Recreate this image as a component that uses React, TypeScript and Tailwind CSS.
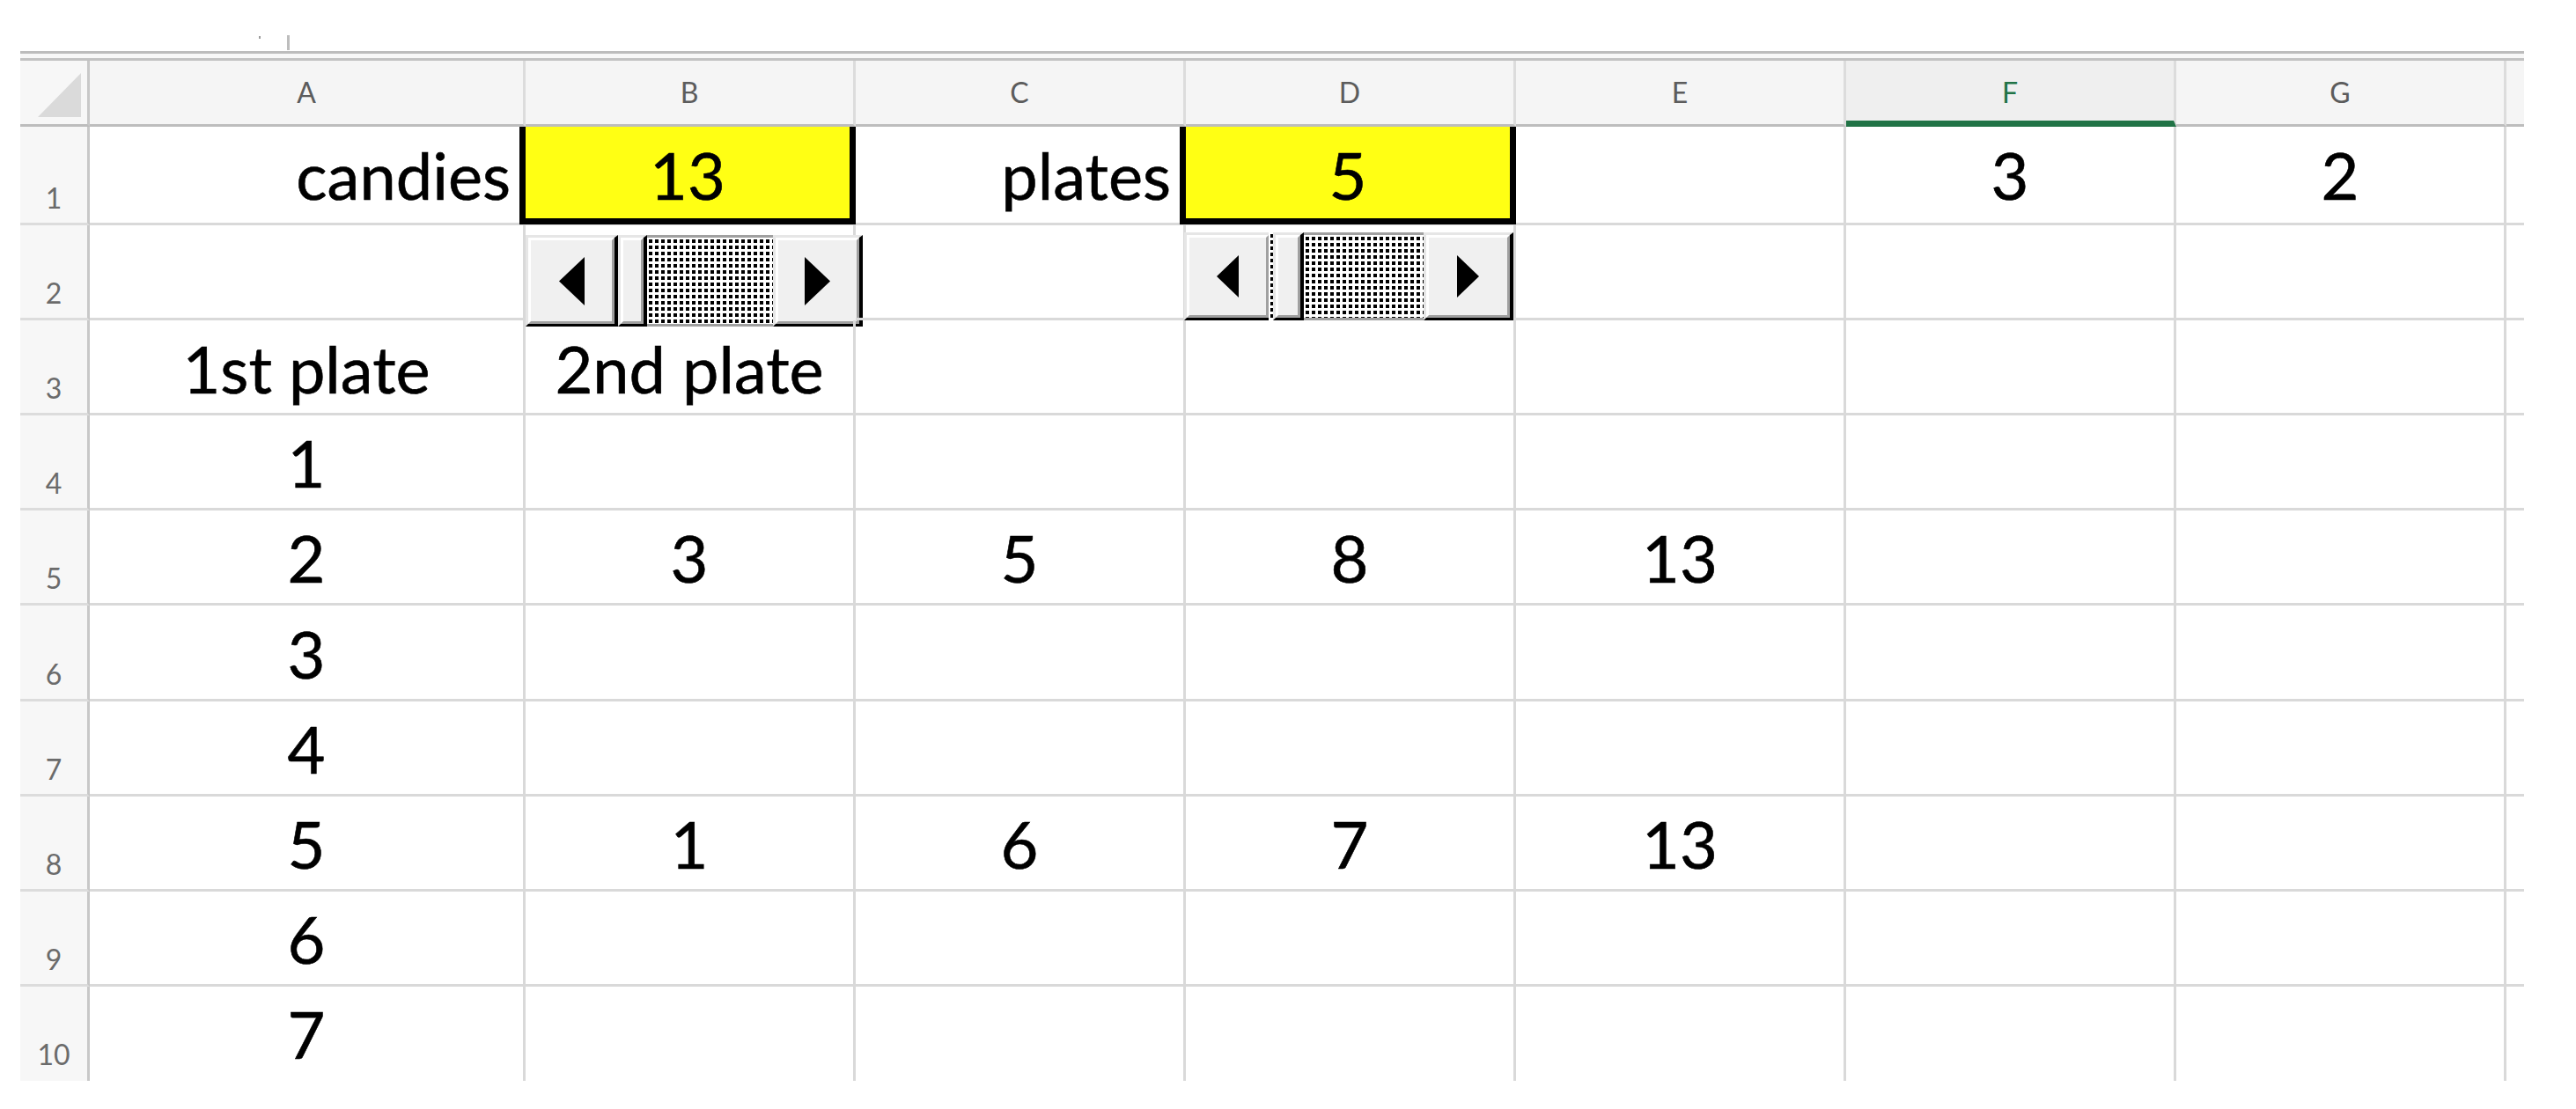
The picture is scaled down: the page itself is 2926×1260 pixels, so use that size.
import React from "react";

type CellSpec = {
  text?: string;
  right?: boolean;
  yellow?: boolean;
  scroll?: "b" | "d";
};

type RowSpec = {
  label: string;
  h: string;
  pad: string;
  labelPad: string;
  last?: boolean;
  cells: CellSpec[];
};

const colWidths = [
  "w-[495px]",
  "w-[375px]",
  "w-[375px]",
  "w-[375px]",
  "w-[375px]",
  "w-[375px]",
  "w-[375px]",
];
const colNames = ["A", "B", "C", "D", "E", "F", "G"];

const rows: RowSpec[] = [
  {
    label: "1",
    h: "h-[112px]",
    pad: "pb-[17px]",
    labelPad: "pb-[12px]",
    cells: [
      { text: "candies", right: true },
      { text: "13", yellow: true },
      { text: "plates", right: true },
      { text: "5", yellow: true },
      {},
      { text: "3" },
      { text: "2" },
    ],
  },
  {
    label: "2",
    h: "h-[108px]",
    pad: "pb-[14px]",
    labelPad: "pb-[12px]",
    cells: [{}, { scroll: "b" }, {}, { scroll: "d" }, {}, {}, {}],
  },
  {
    label: "3",
    h: "h-[108px]",
    pad: "pb-[13px]",
    labelPad: "pb-[12px]",
    cells: [{ text: "1st plate" }, { text: "2nd plate" }, {}, {}, {}, {}, {}],
  },
  {
    label: "4",
    h: "h-[108px]",
    pad: "pb-[14px]",
    labelPad: "pb-[12px]",
    cells: [{ text: "1" }, {}, {}, {}, {}, {}, {}],
  },
  {
    label: "5",
    h: "h-[108px]",
    pad: "pb-[14px]",
    labelPad: "pb-[12px]",
    cells: [
      { text: "2" },
      { text: "3" },
      { text: "5" },
      { text: "8" },
      { text: "13" },
      {},
      {},
    ],
  },
  {
    label: "6",
    h: "h-[109px]",
    pad: "pb-[14px]",
    labelPad: "pb-[12px]",
    cells: [{ text: "3" }, {}, {}, {}, {}, {}, {}],
  },
  {
    label: "7",
    h: "h-[108px]",
    pad: "pb-[14px]",
    labelPad: "pb-[12px]",
    cells: [{ text: "4" }, {}, {}, {}, {}, {}, {}],
  },
  {
    label: "8",
    h: "h-[108px]",
    pad: "pb-[14px]",
    labelPad: "pb-[12px]",
    cells: [
      { text: "5" },
      { text: "1" },
      { text: "6" },
      { text: "7" },
      { text: "13" },
      {},
      {},
    ],
  },
  {
    label: "9",
    h: "h-[108px]",
    pad: "pb-[14px]",
    labelPad: "pb-[12px]",
    cells: [{ text: "6" }, {}, {}, {}, {}, {}, {}],
  },
  {
    label: "10",
    h: "h-[107px]",
    pad: "pb-[16px]",
    labelPad: "pb-[14px]",
    last: true,
    cells: [{ text: "7" }, {}, {}, {}, {}, {}, {}],
  },
];

const Arrow = ({ dir, w, h }: { dir: "left" | "right"; w: number; h: number }) => (
  <svg width={w} height={h} viewBox={`0 0 ${w} ${h}`} className="block">
    <polygon
      points={dir === "left" ? `${w},0 0,${h / 2} ${w},${h}` : `0,0 ${w},${h / 2} 0,${h}`}
      fill="#000"
    />
  </svg>
);

// dithered scroll track
const Dots = ({ id }: { id: string }) => (
  <svg className="block h-full w-full" shapeRendering="crispEdges">
    <defs>
      <pattern id={id} width="7" height="7" patternUnits="userSpaceOnUse">
        <rect x="2" y="2" width="4" height="4" fill="#000" />
      </pattern>
    </defs>
    <rect width="100%" height="100%" fill={`url(#${id})`} />
  </svg>
);

const Button = ({
  className,
  edge,
  children,
}: {
  className: string;
  edge: boolean;
  children?: React.ReactNode;
}) => (
  <div
    className={`${className} flex shrink-0 border-t-[3px] border-l-[3px] border-b-[3px] border-t-[#e6e6e6] border-l-[#e6e6e6] border-b-black ${
      edge ? "border-r-[4px] border-r-black" : ""
    }`}
  >
    <div className="flex flex-1 items-center justify-center border-[3px] border-t-white border-l-white border-b-[#a0a0a0] border-r-[#a0a0a0] bg-[#f0f0f0]">
      {children}
    </div>
  </div>
);

const ScrollBar = ({ variant }: { variant: "b" | "d" }) => {
  const big = variant === "b";
  return (
    <div
      className={
        big
          ? "absolute left-0 top-[11px] flex h-[104px] w-[383px]"
          : "absolute -left-[2px] top-[8px] flex h-[100px] w-[374px]"
      }
    >
      <Button className={big ? "w-[105px]" : "w-[96px]"} edge={big}>
        <Arrow dir="left" w={big ? 29 : 25} h={big ? 55 : 48} />
      </Button>
      {!big && (
        <div className="w-[5px] shrink-0 bg-white">
          <Dots id="strip-d" />
        </div>
      )}
      <Button className={big ? "w-[33px]" : "w-[35px]"} edge />
      <div
        className={`${big ? "w-[143px]" : "w-[136px]"} shrink-0 border-y-[3px] border-[#a0a0a0] bg-white`}
      >
        <Dots id={`track-${variant}`} />
      </div>
      <Button className="w-[102px]" edge>
        <Arrow dir="right" w={big ? 29 : 25} h={big ? 55 : 48} />
      </Button>
    </div>
  );
};

export default function App() {
  return (
    <div className="h-[1260px] w-[2926px] overflow-hidden bg-white font-[Lato,sans-serif] text-black">
      {/* stray marks above the sheet */}
      <div className="flex h-[58px] items-start pt-[40px]">
        <div className="ml-[294px] mt-[1px] h-[3px] w-[2px] bg-[#9c9c9c]" />
        <div className="ml-[30px] h-[17px] w-[3px] bg-[#bdbdbd]" />
      </div>

      <div className="ml-[23px] w-[2844px]">
        <div className="h-[3px] bg-[#bcbcbc]" />
        <div className="h-[5px] bg-[#f7f7f7]" />
        <div className="h-[3px] bg-[#c2c2c2]" />

        {/* column headers */}
        <div className="flex h-[75px]">
          <div className="flex w-[79px] shrink-0 items-end justify-end border-b-[3px] border-r-[3px] border-b-[#bdbdbd] border-r-[#c8c8c8] bg-[#f7f7f7] pb-[8px] pr-[7px]">
            <svg width="49" height="50" className="block">
              <polygon points="49,0 49,50 0,50" fill="#dadada" />
            </svg>
          </div>
          {colNames.map((name, i) =>
            name === "F" ? (
              <div
                key={name}
                className={`${colWidths[i]} flex shrink-0 items-center justify-center border-b-[7px] border-r-[3px] border-b-[#217346] border-r-[#dcdcdc] bg-[#efefef] pt-[4px] text-[32px] text-[#217346]`}
              >
                {name}
              </div>
            ) : (
              <div
                key={name}
                className={`${colWidths[i]} flex shrink-0 items-center justify-center border-b-[3px] border-r-[3px] border-b-[#bdbdbd] border-r-[#dcdcdc] bg-[#f5f5f5] text-[32px] text-[#5c5c5c]`}
              >
                {name}
              </div>
            )
          )}
          <div className="w-[20px] shrink-0 border-b-[3px] border-b-[#bdbdbd] bg-[#f5f5f5]" />
        </div>

        {/* rows */}
        {rows.map((row) => (
          <div key={row.label} className={`flex ${row.h}`}>
            <div
              className={`flex w-[79px] shrink-0 items-end justify-center border-r-[3px] border-r-[#c8c8c8] bg-[#f7f7f7] text-[32px] leading-none text-[#6b6b6b] ${
                row.last ? "" : "border-b-[3px] border-b-[#dcdcdc]"
              } ${row.labelPad}`}
            >
              {row.label}
            </div>
            {row.cells.map((cell, i) => {
              const base = `${colWidths[i]} relative shrink-0 border-r-[3px] border-[#d9d9d9] ${
                row.last ? "" : "border-b-[3px]"
              }`;
              if (cell.yellow) {
                return (
                  <div key={i} className={base}>
                    <div className="-ml-[7px] flex h-[111px] w-[382px] items-end justify-center border-x-[7px] border-b-[7px] border-black bg-[#ffff14] pb-[12px] text-[74px] leading-none [-webkit-text-stroke:0.6px_#000]">
                      {cell.text}
                    </div>
                  </div>
                );
              }
              if (cell.scroll) {
                return (
                  <div key={i} className={base}>
                    <ScrollBar variant={cell.scroll} />
                  </div>
                );
              }
              return (
                <div
                  key={i}
                  className={`${base} flex items-end text-[74px] leading-none [-webkit-text-stroke:0.6px_#000] ${row.pad} ${
                    cell.right ? "justify-end pr-[14px]" : "justify-center"
                  }`}
                >
                  {cell.text}
                </div>
              );
            })}
            <div
              className={`w-[20px] shrink-0 border-[#d9d9d9] ${row.last ? "" : "border-b-[3px]"}`}
            />
          </div>
        ))}
      </div>
    </div>
  );
}
